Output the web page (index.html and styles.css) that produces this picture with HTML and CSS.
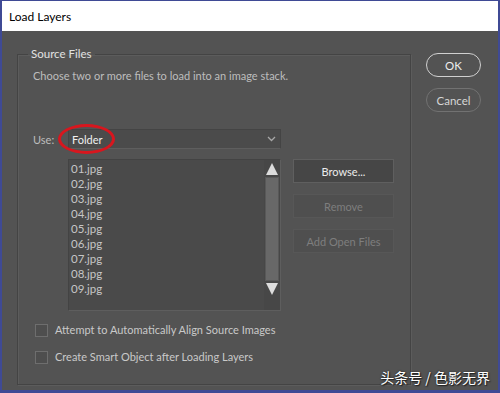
FILE: index.html
```html
<!DOCTYPE html>
<html>
<head>
<meta charset="utf-8">
<link rel="stylesheet" href="styles.css">
</head>
<body>
<div class="window">
  <div class="titlebar">Load Layers</div>
  <div class="content">
    <fieldset class="group">
      <legend>Source Files</legend>
      <div class="hint">Choose two or more files to load into an image stack.</div>
      <div class="grid">
        <div class="use-label">Use:</div>
        <div class="select">
          <span class="select-value">Folder</span>
          <svg class="chev" width="9" height="6" viewBox="0 0 9 6"><path d="M1 1 L4.5 4.5 L8 1" fill="none" stroke="#a8a8a8" stroke-width="1.3"/></svg>
          <span class="ring"></span>
        </div>
        <div class="list">
          <ul class="files">
            <li>01.jpg</li><li>02.jpg</li><li>03.jpg</li><li>04.jpg</li><li>05.jpg</li><li>06.jpg</li><li>07.jpg</li><li>08.jpg</li><li>09.jpg</li>
          </ul>
          <div class="scroll">
            <svg class="arrow" width="14" height="14" viewBox="0 0 14 14"><path d="M7 1 L13 13 L1 13 Z" fill="#dcdcdc"/></svg>
            <div class="thumb"></div>
            <svg class="arrow" width="14" height="14" viewBox="0 0 14 14"><path d="M1 1 L13 1 L7 13 Z" fill="#dcdcdc"/></svg>
          </div>
        </div>
        <div class="actions">
          <div class="btn">Browse...</div>
          <div class="btn disabled">Remove</div>
          <div class="btn disabled">Add Open Files</div>
        </div>
      </div>
      <div class="checks">
        <label class="check"><span class="box"></span>Attempt to Automatically Align Source Images</label>
        <label class="check"><span class="box"></span>Create Smart Object after Loading Layers</label>
      </div>
    </fieldset>
    <div class="side">
      <div class="pill ok">OK</div>
      <div class="pill cancel">Cancel</div>
    </div>
  </div>
  <div class="watermark">头条号 / 色影无界</div>
</div>
</body>
</html>
```

FILE: styles.css
```css
* { box-sizing: border-box; }
html, body { margin: 0; padding: 0; }
body {
  width: 500px;
  height: 393px;
  overflow: hidden;
  font-family: Lato, "Noto Sans", "Noto Sans CJK SC", sans-serif;
  font-size: 11px;
}
.window {
  position: relative;
  width: 500px;
  height: 393px;
  background: #535353;
  border-top: 1px solid #3f4a95;
  border-left: 2px solid #3f4a95;
  border-right: 2px solid #3f4a95;
  border-bottom: 3px solid #3f4a95;
  display: flex;
  flex-direction: column;
}
.titlebar {
  height: 30px;
  background: #ffffff;
  color: #000;
  font-size: 12px;
  padding-left: 7px;
  display: flex;
  align-items: center;
  flex: none;
}
.content {
  flex: 1;
  display: flex;
  padding: 15px 0 0 15px;
}
.group {
  margin: 0;
  width: 394px;
  height: 339px;
  border: 1px solid #444444;
  box-shadow: inset 1px 1px 0 #5c5c5c, 1px 1px 0 #5c5c5c;
  padding: 5px 0 0 15px;
  display: flex;
  flex-direction: column;
}
.group legend {
  color: #e2e2e2;
  padding: 0 3px;
  margin-left: -5px;
  font-size: 11.5px;
  line-height: 16px;
}
.hint {
  color: #bdbdbd;
  line-height: 16px;
  padding-top: 1px;
}
.grid {
  margin-top: 45px;
  display: grid;
  grid-template-columns: 35px 213px 101px;
  grid-template-rows: 20px 152px;
  row-gap: 10px;
}
.use-label {
  color: #bdbdbd;
  display: flex;
  align-items: center;
}
.select {
  position: relative;
  background: #4b4b4b;
  border: 1px solid #444;
  border-bottom-color: #5e5e5e;
  display: flex;
  align-items: center;
  justify-content: space-between;
  padding: 0 4px 0 3px;
  color: #f0f0f0;
}
.ring {
  position: absolute;
  left: -11px;
  top: -6px;
  width: 57px;
  height: 30px;
  border: 3px solid #d8161e;
  border-radius: 50%;
}
.list {
  grid-column: 2;
  grid-row: 2;
  display: flex;
  background: #4a4a4a;
  border: 1px solid #434343;
  border-bottom-color: #5e5e5e;
  border-right-color: #5e5e5e;
}
.files {
  list-style: none;
  margin: 0;
  padding: 1px 0 0 2px;
  flex: 1;
  color: #c6c6c6;
  font-size: 11.5px;
  line-height: 15px;
}
.scroll {
  width: 16px;
  display: flex;
  flex-direction: column;
  align-items: center;
  padding: 2px 0 14px;
  background: #474747;
}
.arrow { flex: none; }
.thumb {
  flex: 1;
  width: 14px;
  margin: 1px 0;
  background: #686868;
  border: 1px solid #585858;
}
.actions {
  grid-column: 3;
  grid-row: 2;
  display: flex;
  flex-direction: column;
  gap: 11px;
  padding-left: 12px;
}
.btn {
  height: 24px;
  width: 101px;
  background: #464646;
  border: 1px solid #5f5f5f;
  color: #ececec;
  display: flex;
  align-items: center;
  justify-content: center;
}
.btn.disabled {
  background: #4f4f4f;
  border-color: #575757;
  color: #7e7e7e;
}
.checks {
  margin-top: 12px;
  display: flex;
  flex-direction: column;
  gap: 13px;
  padding-left: 2px;
}
.check {
  display: flex;
  align-items: center;
  color: #c9c9c9;
  line-height: 14px;
}
.box {
  width: 13px;
  height: 13px;
  border: 1px solid #6e6e6e;
  background: #4e4e4e;
  margin-right: 7px;
}
.side {
  padding: 7px 0 0 15px;
  display: flex;
  flex-direction: column;
  gap: 11px;
}
.pill {
  width: 55px;
  height: 24px;
  border-radius: 12px;
  display: flex;
  align-items: center;
  justify-content: center;
  font-size: 11.5px;
}
.ok {
  border: 1.5px solid #d0d0d0;
  color: #eeeeee;
}
.cancel {
  border: 1.5px solid #727272;
  color: #d6d6d6;
}
.watermark {
  position: absolute;
  right: 8px;
  bottom: 3px;
  color: #ffffff;
  font-family: "Noto Sans CJK SC", sans-serif;
  font-size: 14px;
  text-shadow: 0 0 2px #222, 1px 1px 1px #222;
}
```
